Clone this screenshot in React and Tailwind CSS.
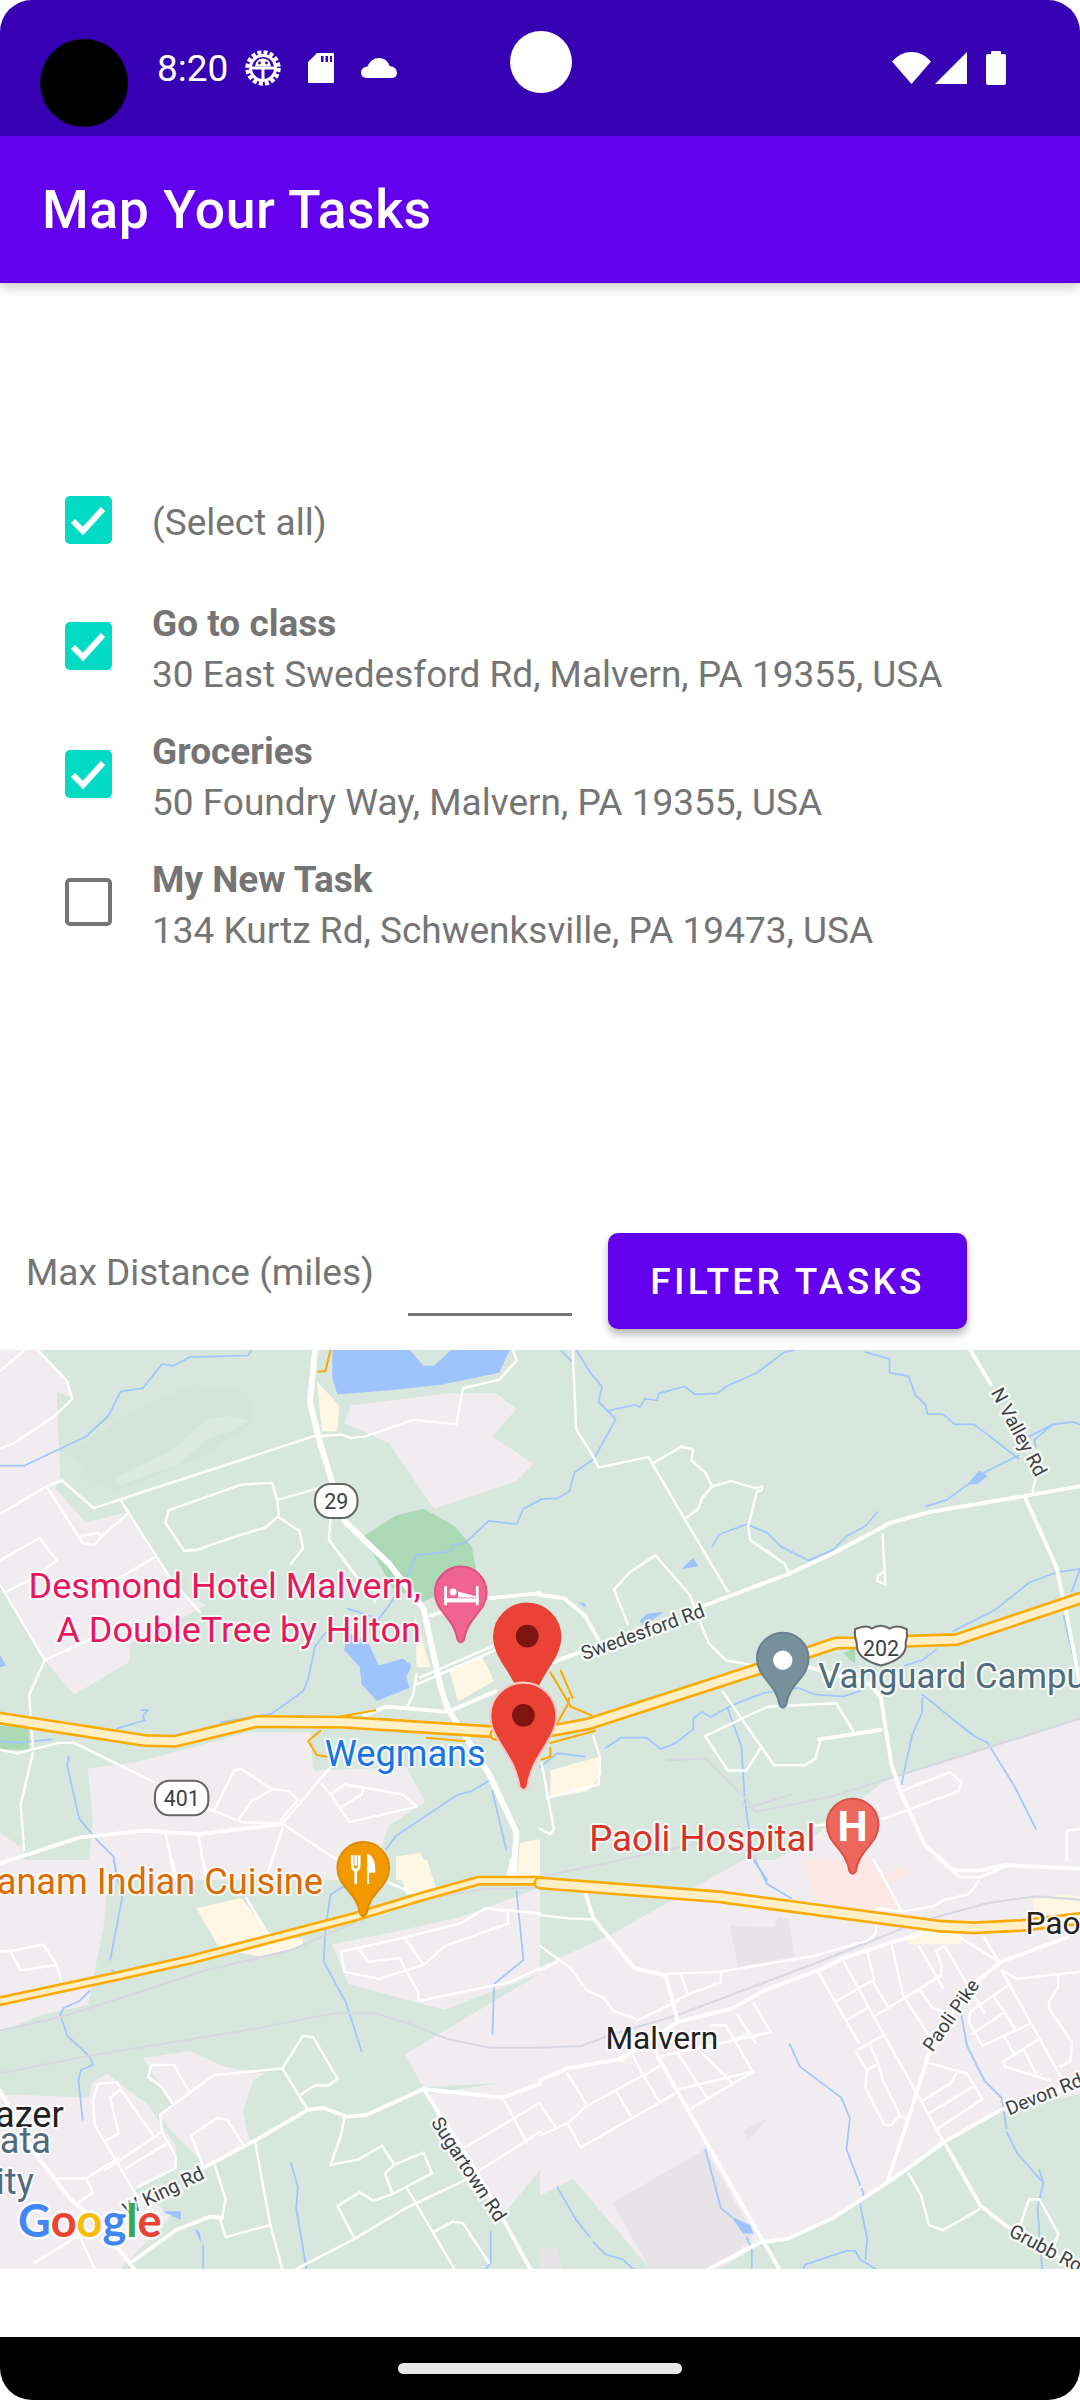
import React from 'react';

const S = 0.34435;

// Map pieces, traced per quadrant. Each quadrant has its own origin.
const QUADS = [
  {
    id: 'tl',
    t: `translate(0 -10) scale(${S})`,
    urban: [
      '0,29 110,29 190,110 210,170 165,150 175,400 160,430 250,530 370,500 450,630 530,740 600,770 380,880 375,935 215,1030 130,930 0,700',
      '1000,240 1020,190 1300,155 1440,155 1500,200 1430,280 1550,360 1500,410 1260,490 1130,300',
      '255,1245 400,1225 720,1140 900,1140 910,1250 1180,1240 1235,1340 1130,1410 1100,1490 1000,1568 250,1568 270,1400',
      '0,1430 70,1480 70,1568 0,1568',
    ],
    park: ['1055,570 1150,510 1230,490 1320,540 1370,600 1385,680 1230,760 1140,720', '0,1120 85,1125 85,1190 0,1190'],
    golf: ['200,330 380,210 560,130 720,150 730,240 600,330 340,440 270,410'],
    golf2: ['330,400 500,320 600,230 670,220 725,235 680,260 600,290 520,360 340,425'],
    water: [
      '965,29 1190,29 1230,75 1260,75 1310,29 1480,29 1450,95 1280,130 1140,145 980,158 965,110',
      '1000,900 1010,850 1070,880 1100,945 1170,925 1195,945 1180,980 1190,1010 1095,1048 1050,1000 1045,950',
      '0,915 18,945 0,950',
    ],
    sand: [
      '920,120 985,190 980,265 935,265',
      '1205,800 1250,950 1210,950',
      '1305,960 1400,920 1435,990 1330,1050',
      '1150,1500 1220,1490 1260,1568 1150,1568',
      '1510,1460 1568,1450 1568,1568 1500,1568',
    ],
    rivers: [
      '0,365 70,365 250,280 315,220 350,150 415,140 470,70 505,75 550,50 720,45 730,29',
      '1350,590 1420,525 1500,535 1520,490 1568,465',
      '1350,590 1315,595 1305,615 1210,625 1180,690 1130,770 1100,810 1010,780',
      '945,850 915,890 895,985 880,1020 790,1085 640,1110',
      '410,1075 430,1075 415,1090 420,1105 340,1128',
      '200,1210 195,1235 230,1390 280,1450 330,1500 340,1568',
      '0,1165 50,1170 150,1160',
      '1120,1480 1150,1440 1330,1320 1370,1310 1420,1280',
      '1430,1310 1470,1480',
    ],
    rail: [],
    thin: [
      '0,90 70,29',
      '110,29 195,120 210,170 160,220 40,300 0,315',
      '0,505 135,425 180,408 272,488 910,280 990,275 1020,285 1060,280 1200,232 1325,245 1345,140 1450,115 1500,60 1490,29',
      '135,425 240,590 275,595 295,570 370,505',
      '230,570 285,560 295,570',
      '350,465 500,700 580,790',
      '0,640 115,575 165,640 100,690 20,730',
      '450,630 280,730',
      '480,530 490,495 700,420 790,415 805,465 810,515 870,555 880,605 845,650',
      '480,530 535,612 570,610 685,570 770,545 805,515',
      '805,465 925,430',
      '960,515 955,580 1090,760',
      '0,710 130,930 85,1030 95,1180',
      '130,930 260,870',
      '95,1200 60,1350 70,1480',
      '0,1190 50,1200 170,1170 215,1170 450,1285',
      '605,1360 700,1400 820,1405',
      '620,1370 680,1250 700,1245 790,1305 840,1310 865,1335 815,1395',
      '695,1390 730,1340 790,1305',
      '960,1240 820,1405 980,1510',
      '935,1290 960,1320 1000,1290 1170,1320 1210,1355 1015,1400 960,1320',
      '985,1360 1050,1320 1055,1300',
      '480,1430 510,1568',
      '575,1435 600,1568',
      '820,1420 780,1540',
      '1210,1000 1440,900',
      '1220,980 1430,890',
      '1210,970 1200,1030 1180,1070',
    ],
    thick: [
      '0,1520 230,1445 420,1425 580,1435 820,1405',
      '1250,800 1420,750 1568,735',
      '1300,1080 1440,1020',
      '1060,1090 1120,1065 1300,1080',
    ],
    main: ['915,29 900,180 930,300 965,415', '1000,525 1130,650 1230,780 1280,1010 1300,1070 1420,1260 1500,1430 1490,1568'],
    ramps: ['930,1135 895,1165 920,1205 950,1210', '980,1095 1090,1075', '1100,1100 1230,1110', '1240,1155 1350,1165', '960,29 945,90 925,92'],
    hwy: ['0,1098 420,1163 510,1165 745,1108 1000,1110 1440,1138 1568,1145'],
    hwyThin: [],
  },
  {
    id: 'tr',
    t: `translate(${540} -10) scale(${S})`,
    urban: ['1568,1100 1000,1280 760,1470 570,1568 1568,1568'],
    park: ['880,910 915,895 915,940'],
    golf: [],
    golf2: [],
    water: [
      '410,665 445,632 460,658',
      '1240,420 1275,380 1300,395 1270,418',
      '110,760 130,765 135,780',
      '290,815 310,795 360,790 300,830',
    ],
    sand: ['30,1250 170,1210 180,1260 140,1310 30,1330'],
    rivers: [
      '60,29 90,60',
      '105,29 150,100 180,135 170,180 220,230 165,330 150,350 100,385 85,440 50,460 0,462',
      '200,205 275,188 290,195 305,170 340,175 345,155 420,135 450,158 515,155 540,135 630,95 710,35 740,29',
      '945,35 1015,55 1015,95 1070,105 1090,160 1120,190 1125,215 1170,215 1205,245 1260,245 1320,290 1390,345',
      '1420,280 1490,245 1550,238 1568,245',
      '1440,310 1435,290 1490,245',
      '1390,335 1290,385 1235,425 1180,465 1120,483',
      '500,600 520,565 600,535 660,560 700,600 780,640 850,610 890,570 945,540 980,500',
      '190,1185 235,1155 310,1155 350,1188 395,1170 445,1130 445,1100 470,1080 495,1095 560,1060 610,1040 650,1025 750,1010 800,1030 880,1035 930,1020',
      '130,1210 50,1200 0,1240',
      '545,1070 585,1180 595,1340 620,1510 660,1568',
      '1150,900 1110,930 1060,945',
      '1110,1030 1260,1150 1300,1170 1380,1300 1440,1420',
      '1110,1040 1110,1080 1080,1150 1050,1290',
      '1200,845 1320,785 1420,705 1500,675 1568,665',
      '1568,665 1545,730',
      '1520,800 1568,1000',
    ],
    rail: ['370,1220 480,1215 620,1355 730,1320', '590,1345 630,1370 850,1325 1568,1100', '0,1560 560,1440'],
    thin: [
      '95,29 105,260 150,330 170,370 315,340 420,520 545,730',
      '325,360 410,310 445,318 440,350 480,385 500,425 470,460 460,490 420,520',
      '500,425 555,410 625,430 645,425 645,435 630,440 605,540 610,580 710,650 720,670',
      '215,725 260,675 335,625 365,660 435,740 465,820 490,880 540,930 620,945',
      '215,725 255,825',
      '995,565 1003,710 980,700 980,685 1003,670',
      '1440,400 1430,440',
      '480,1150 660,1065 860,1055 910,1135',
      '480,1150 545,1250 600,1250 640,1185',
      '530,1020 645,1185 680,1235 770,1235 800,1215 815,1160',
      '1050,1310 1190,1255 1225,1285 1215,1310 1000,1390 800,1410',
      '1530,1425 1568,1420',
      '1530,1425 1530,1510',
      '5,1230 40,1420 30,1435 0,1420',
      '20,1330 170,1290 175,1215 155,1150',
    ],
    thick: [
      '0,950 120,905',
      '480,770 720,680 850,620 1020,530 1130,500 1568,425',
      '810,1160 990,1132',
      '0,740 70,750 130,800 170,870',
      '780,950 960,1000 990,1040 1020,1230 1050,1320 1120,1470 1200,1540 1280,1540 1350,1525 1568,1535',
      '1250,29 1310,130',
      '1410,460 1500,660 1530,800 1568,1000',
    ],
    main: [],
    ramps: ['30,965 90,1065 150,1090', '60,960 95,1040', '40,1130 80,1060 85,1040', '30,1170 160,1135', '30,1185 30,1210 5,1218'],
    hwy: ['-128,1145 30,1135 140,1115 620,960 860,880 910,880 1060,875 1210,870 1568,750'],
    hwyThin: [],
  },
  {
    id: 'bl',
    t: `translate(0 ${510}) scale(${S})`,
    urban: [
      '0,0 320,0 300,200 255,420 120,450 0,500',
      '0,680 260,690 265,650 310,620 430,710 510,830 510,890 390,960 500,1030 350,1188 0,1188',
      '415,575 550,555 650,600 770,620 735,640 705,730 725,815 600,890 500,790 460,740 500,710',
      '965,245 1140,210 1340,165 1568,80 1568,330 1290,435 1010,360',
      '1175,565 1568,330 1568,640 1230,660',
      '1240,680 1568,630 1568,900 1470,1020 1360,950',
    ],
    park: [],
    golf: [],
    golf2: [],
    water: ['470,1020 525,1020 525,1045', '565,1070 580,1080 585,1115'],
    sand: [
      '570,140 700,110 780,210 880,230 880,250 760,280 640,260',
      '1150,0 1240,0 1270,90 1180,100',
      '1510,0 1568,10 1568,45 1510,40',
    ],
    rivers: [
      '330,0 355,110 320,290',
      '325,320 340,330',
      '260,380 230,410 185,430 175,450 195,510 260,570 270,595 235,610 228,640 240,755',
      '960,100 945,200 940,295 1005,415 1050,555',
      '960,100 1000,75',
      '1500,90 1520,290 1435,360 1430,505',
      '845,880 865,950 860,1010 890,1188',
      '1425,1080 1425,1170 1410,1188',
      '590,1120 590,1188',
    ],
    rail: [
      '0,620 250,570 740,490 970,445 1090,445 1200,480 1300,520 1420,545 1568,545',
      '0,495 180,455 600,320 850,260 1150,130 1400,85 1568,80',
    ],
    thin: [
      '0,265 30,265 125,245 165,305 180,360',
      '30,265 60,320 165,305',
      '640,1045 655,1095 785,1060',
      '740,815 785,1060 820,1188',
      '625,890 655,985 645,1040',
      '1000,750 990,800 960,885 1040,870 1110,830 1145,885 1230,850 1255,910 1140,970 1085,990 1045,965 980,1005 1030,1100',
      '1145,885 1118,910 1140,970',
      '860,1188 1030,1100 1180,1010 1340,935 1568,790',
      '1180,950 1320,1188',
      '1260,1080 1315,1050 1345,1055 1420,1170',
      '1350,835 1568,705',
      '1465,700 1530,820',
      '820,605 880,510 910,515 980,635 955,655 915,655 875,680',
      '820,605 890,720',
      '820,605 620,625 465,740 470,790 510,860 510,895 400,950',
      '430,630 440,595 505,595 550,675',
      '430,630 470,660 500,705',
      '270,700 285,650 340,645 350,665 445,800',
      '320,690 350,665',
      '320,690 345,795 305,815',
      '270,700 275,770 400,980',
      '470,790 305,900',
      '490,820 365,895',
      '345,865 250,925 155,925',
      '250,925 270,965 220,1000',
      '555,800 630,750 660,755 705,825',
      '555,800 590,890',
      '990,265 1040,255 1175,225 1230,305 1100,345 1000,325 990,265',
      '1040,255 1070,295 1160,285 1215,385 1215,410 1480,355 1568,315',
      '1230,305 1290,250 1475,185 1475,150 1410,140 1335,185 1175,225',
      '1410,140 1568,155',
      '500,0 510,50',
      '590,0 595,40',
      '715,110 775,210',
      '1115,60 1220,105',
      '100,1170 230,1090',
      '230,1090 275,1188',
    ],
    thick: [
      '0,670 100,850 200,980 290,1060 390,1188',
      '385,1165 510,1075 610,1035 645,1040',
      '590,895 740,815 895,725 940,720 1005,745 1065,740 1230,665 1460,690 1568,650',
      '1230,665 1350,850 1430,985 1540,1188',
    ],
    main: ['1490,0 1480,45'],
    ramps: [],
    hwy: [],
    hwyThin: ['0,410 350,335 550,290 1030,165 1230,105 1390,60 1568,60'],
  },
  {
    id: 'br',
    t: `translate(${540} ${510}) scale(${S})`,
    urban: ['0,310 210,215 590,0 1568,0 1568,680 1340,725 1180,820 1020,930 850,1040 720,1100 640,1115 520,1188 320,1188 95,925 0,975'],
    urban2: [
      '210,995 480,840 620,1090 520,1188 320,1188',
      '0,1130 50,1125 65,1188 0,1188',
      '550,190 680,195 690,165 720,170 740,280 575,310',
      '590,785 660,750 600,820',
    ],
    pink: ['765,0 960,0 1050,150 880,150 800,110', '1000,50 1050,15 1065,40 1020,70'],
    park: [],
    golf: [],
    golf2: [],
    water: ['555,1035 610,1060 620,1085 590,1085'],
    sand: ['1060,230 1100,205 1230,205 1220,245 1080,245', '1430,115 1520,100 1568,105 1568,160 1435,160', '215,580 270,560 240,590'],
    rivers: [
      '725,535 755,600 875,690 900,750 890,840 930,945',
      '935,955 940,975',
      '930,1000 950,1100 945,1160',
      '765,1188 770,1175 890,1135 915,1135 930,1160 975,1188',
      '480,840 525,1010 555,1035',
      '600,1095 615,1130 615,1188',
      '50,950 105,1045 145,1095',
      '155,1110 190,1145 240,1160 270,1188',
      '1222,440 1240,540 1290,640 1340,690 1355,780',
      '1355,790 1385,850 1450,925 1462,935 1445,1010 1458,1188',
      '625,0 660,70 730,112',
      '1450,900 1462,935',
    ],
    rail: ['0,545 120,540 200,510 300,480 400,450 800,300 1100,180 1300,125 1440,105 1568,115'],
    thin: [
      '370,330 520,325 790,280 950,235 975,215 980,140',
      '410,335 430,390',
      '525,325 525,355 430,390',
      '390,410 430,390',
      '285,465 400,410',
      '0,250 90,315 135,378 185,400 215,440 275,460',
      '0,320 50,295',
      '0,160 85,170 150,172',
      '980,140 1050,150 1140,135 1175,115 1245,100 1275,60',
      '970,0 1050,150',
      '1160,0 1220,50 1280,50 1360,15 1568,25',
      '1100,250 1170,370',
      '808,325 925,530',
      '882,295 1000,510 1090,670 1170,815',
      '860,410 965,350 1010,425',
      '890,465 950,430',
      '950,265 970,345',
      '1020,240 1055,395 1130,510',
      '970,455 1165,335 1165,300 1150,265 1175,250 1290,445',
      '1105,380 1140,430 1170,440',
      '925,550 995,510',
      '918,560 950,610 975,595',
      '950,610 945,660 1000,770 1020,770 1045,740 1060,750',
      '960,540 985,600 995,640 1045,740',
      '1220,225 1340,300',
      '1290,225 1335,300',
      '1340,320 1385,345 1568,325',
      '1505,335 1505,370 1478,410 1478,430 1545,530 1540,585 1510,600',
      '1340,320 1510,625',
      '1365,360 1250,440 1245,470 1285,540 1425,475',
      '1320,400 1380,490',
      '1255,505 1345,445',
      '1350,515 1375,560',
      '1450,520 1345,585 1350,600 1480,640',
      '1405,550 1440,620',
      '1130,590 1240,620 1285,695 1155,780',
      '1210,620 1190,650 1110,700',
      '1255,660 1130,735',
      '0,800 80,765 135,715 300,625 345,600',
      '80,620 135,710',
      '0,710 45,775',
      '80,765 118,835 390,680',
      '220,670 265,745',
      '300,625 345,700',
      '270,570 300,625',
      '400,560 485,690',
      '470,560 560,650',
      '405,665 615,615',
      '440,720 620,615',
      '500,480 540,480 615,610',
      '350,570 670,500',
      '620,415 670,500',
      '570,445 625,530',
      '570,520 610,500',
      '1070,910 1105,970 1130,1060 1170,1075 1275,1015',
      '1395,1060 1420,985 1450,985 1505,1085 1490,1130',
    ],
    thick: [
      '490,1188 640,1110 720,1100 850,1040 1020,930 1180,815 1340,725 1568,650',
      '130,90 155,170 275,315 365,335 400,470',
      '330,550 500,850 650,1110 695,1188',
      '0,640 80,605 225,580 270,555 400,470 560,430 660,375 810,320 880,285 1020,240 1100,215 1160,205',
      '1265,355 1340,295 1530,225',
      '1010,930 1080,720 1130,560',
      '1190,450 1265,360',
      '1180,830 1280,1005 1350,1060 1568,1188',
    ],
    main: [],
    ramps: [],
    hwy: ['0,67 520,107 1160,192 1260,197 1400,190 1568,170'],
    hwyThin: [],
  },
];

function Lines({ list, color, width }) {
  return list.map((p, i) => (
    <polyline key={i} points={p} fill="none" stroke={color} strokeWidth={width} strokeLinejoin="round" strokeLinecap="round" />
  ));
}

function Areas({ list = [], color }) {
  return list.map((p, i) => <polygon key={i} points={p} fill={color} />);
}

function Label({ x, y, size = 105, color, anchor, weight = 400, halo = 12, rotate, children }) {
  return (
    <text
      transform={`translate(${x} ${y})${rotate ? ` rotate(${rotate})` : ''}`}
      fontSize={size}
      fontWeight={weight}
      fill={color}
      textAnchor={anchor}
      stroke="#ffffff"
      strokeOpacity="0.75"
      strokeWidth={halo}
      strokeLinejoin="round"
      paintOrder="stroke"
    >
      {children}
    </text>
  );
}

function Pin({ x, y, r = 75, h = 222, fill, edge, children }) {
  const d = `M0 0C${r * 0.55} 0 ${r} ${r * 0.45} ${r} ${r}C${r} ${r * 1.75} ${r * 0.25} ${h * 0.66} ${r * 0.12} ${h * 0.96}Q0 ${h * 1.02} ${-r * 0.12} ${h * 0.96}C${-r * 0.25} ${h * 0.66} ${-r} ${r * 1.75} ${-r} ${r}C${-r} ${r * 0.45} ${-r * 0.55} 0 0 0Z`;
  return (
    <g transform={`translate(${x} ${y})`}>
      <path d={d} fill={fill} stroke={edge} strokeWidth="6" />
      {children}
    </g>
  );
}

function Shield({ x, y, w, h, rx, size = 62, children }) {
  return (
    <g>
      <rect x={x} y={y} width={w} height={h} rx={rx} fill="#ffffff" stroke="#666666" strokeWidth="6" />
      <text x={x + w / 2} y={y + h / 2 + size * 0.36} fontSize={size} fill="#3c4043" textAnchor="middle">
        {children}
      </text>
    </g>
  );
}

function MapView() {
  return (
    <svg width="1080" height="919" viewBox="0 0 1080 919" className="block bg-[#d7e7dd]">
      {QUADS.map((q) => (
        <g key={q.id} transform={q.t}>
          <Areas list={q.urban} color="#f0ecf0" />
        </g>
      ))}
      {QUADS.map((q) => (
        <g key={q.id} transform={q.t}>
          <Areas list={q.urban2} color="#e7e4e8" />
          <Areas list={q.pink} color="#fee8e5" />
          <Areas list={q.golf} color="#d3e5d9" />
          <Areas list={q.golf2} color="#dbeadd" />
          <Areas list={q.park} color="#abd9b6" />
          <Areas list={q.sand} color="#fef7e4" />
          <Areas list={q.water} color="#9fc3fd" />
          <Lines list={q.rivers} color="#a1c5fd" width={5} />
          <Lines list={q.rail} color="#d6d7e1" width={6} />
        </g>
      ))}
      {QUADS.map((q) => (
        <g key={q.id} transform={q.t}>
          <Lines list={q.thin} color="#ffffff" width={7} />
          <Lines list={q.thick} color="#ffffff" width={11} />
          <Lines list={q.main} color="#ffffff" width={17} />
          <Lines list={q.ramps} color="#fbab00" width={6} />
        </g>
      ))}
      {QUADS.map((q) => (
        <g key={q.id} transform={q.t}>
          <Lines list={q.hwy} color="#fbab00" width={38} />
          <Lines list={q.hwyThin} color="#fbab00" width={29} />
          <Lines list={q.hwy} color="#feefc6" width={23} />
          <Lines list={q.hwyThin} color="#feefc6" width={14} />
        </g>
      ))}

      {/* top left */}
      <g transform={`translate(0 -10) scale(${S})`}>
        <Shield x={915} y={418} w={123} h={99} rx={45}>29</Shield>
        <Shield x={450} y={1280} w={155} h={100} rx={42}>401</Shield>
        <Label x={1222} y={750} size={104.5} color="#e8175d" anchor="end">Desmond Hotel Malvern,</Label>
        <Label x={1222} y={877} size={104.5} color="#e8175d" anchor="end">A DoubleTree by Hilton</Label>
        <Label x={943} y={1237} color="#1a73e8">Wegmans</Label>
        <Pin x={1338} y={658} fill="#ef6492" edge="#e0527f">
          <rect x={-48} y={57} width={8} height={55} fill="#fff" />
          <rect x={44} y={57} width={8} height={55} fill="#fff" />
          <rect x={-48} y={92} width={100} height={12} fill="#fff" />
          <circle cx={-22} cy={74} r={10} fill="#fff" />
          <polygon points="-8,90 -8,72 44,86 44,90" fill="#fff" />
        </Pin>
        <Pin x={1055} y={1458} h={217} fill="#f29900" edge="#e08c00">
          <path d="M-32 38V68Q-32 80 -22 82V122M-22 38V68M-12 38V68Q-12 80 -22 82" fill="none" stroke="#fff" strokeWidth="8" />
          <path d="M14 122V38Q32 44 32 86H14" fill="#fff" stroke="#fff" strokeWidth="6" />
        </Pin>
        <Pin x={1531} y={765} r={96} h={315} fill="#ea4335" edge="#ea4335">
          <circle cx={0} cy={95} r={33} fill="#7f1510" />
        </Pin>
        <Pin x={1520} y={995} r={96} h={315} fill="#ea4335" edge="#f5c9c5">
          <circle cx={0} cy={95} r={33} fill="#7f1510" />
        </Pin>
      </g>

      {/* top right */}
      <g transform={`translate(540 -10) scale(${S})`}>
        <Label x={128} y={930} size={56} color="#3c4043" rotate={-20} halo={14}>Swedesford Rd</Label>
        <Label x={1308} y={152} size={56} color="#3c4043" rotate={62} halo={14}>N Valley Rd</Label>
        <Label x={808} y={1010} size={101} color="#4f6b7d">Vanguard Campus</Label>
        <Label x={143} y={1485} size={106} color="#d93025">Paoli Hospital</Label>
        <path d="M915 840Q950 825 963 838Q990 822 1015 838Q1040 825 1065 840Q1068 860 1062 880Q1068 925 990 945Q915 925 920 880Q912 860 915 840Z" fill="#ffffff" stroke="#666666" strokeWidth="6" />
        <text x={990} y={917} fontSize={62} fill="#3c4043" textAnchor="middle">202</text>
        <Pin x={705} y={850} h={220} fill="#78909c" edge="#6a8290">
          <circle cx={0} cy={80} r={28} fill="#fff" />
        </Pin>
        <Pin x={908} y={1332} h={220} fill="#ee675c" edge="#d9534a">
          <text x={0} y={124} fontSize={124} fontWeight={700} fill="#fff" textAnchor="middle">H</text>
        </Pin>
      </g>

      {/* bottom left */}
      <g transform={`translate(0 510) scale(${S})`}>
        <Label x={938} y={100} color="#dc6c00" anchor="end">anam Indian Cuisine</Label>
        <Label x={185} y={775} color="#202124" anchor="end">azer</Label>
        <Label x={148} y={850} color="#4f6b7d" anchor="end">ata</Label>
        <Label x={98} y={970} color="#4f6b7d" anchor="end">ity</Label>
        <Label x={368} y={1035} size={56} color="#3c4043" rotate={-26} halo={14}>W King Rd</Label>
        <Label x={1250} y={762} size={56} color="#3c4043" rotate={57} halo={14}>Sugartown Rd</Label>
        <text x={52} y={1095} fontFamily="Lato, Roboto, sans-serif" fontSize={131} fontWeight={700} stroke="#ffffff" strokeOpacity="0.7" strokeWidth={16} strokeLinejoin="round" paintOrder="stroke">
          <tspan fill="#4285f4">G</tspan>
          <tspan fill="#ea4335">o</tspan>
          <tspan fill="#fbbc05">o</tspan>
          <tspan fill="#4285f4">g</tspan>
          <tspan fill="#34a853">l</tspan>
          <tspan fill="#ea4335">e</tspan>
        </text>
      </g>

      {/* bottom right */}
      <g transform={`translate(540 510) scale(${S})`}>
        <Label x={190} y={550} size={92} color="#202124">Malvern</Label>
        <Label x={1410} y={215} size={92} color="#202124">Paoli</Label>
        <Label x={1140} y={560} size={55} color="#3c4043" rotate={-55} halo={14}>Paoli Pike</Label>
        <Label x={1362} y={742} size={56} color="#3c4043" rotate={-22} halo={14}>Devon Rd</Label>
        <Label x={1358} y={1090} size={56} color="#3c4043" rotate={28} halo={14}>Grubb Rd</Label>
      </g>
    </svg>
  );
}

function GearIcon() {
  return (
    <svg width="36" height="36" viewBox="0 0 36 36" fill="none">
      <circle cx="18" cy="18" r="15.5" stroke="#fff" strokeWidth="4.5" strokeDasharray="4 2.09" />
      <circle cx="18" cy="18" r="12.5" stroke="#fff" strokeWidth="3" />
      <path d="M7 18H29M18 18V29" stroke="#fff" strokeWidth="3" />
      <path d="M10 16.5Q11 8.5 18 8.5Q25 8.5 26 16.5Z" fill="#fff" />
      <circle cx="14.5" cy="13" r="1.4" fill="#3700b3" />
      <circle cx="21.5" cy="13" r="1.4" fill="#3700b3" />
    </svg>
  );
}

function StatusBar() {
  return (
    <div className="relative flex h-[136px] items-center rounded-t-[32px] bg-[#3700b3] pl-[157px] pr-[74px] text-white">
      <div className="absolute left-[40px] top-[39px] h-[88px] w-[88px] rounded-full bg-black" />
      <div className="absolute left-[510px] top-[31px] h-[62px] w-[62px] rounded-full bg-white" />
      <span className="text-[37px] leading-none">8:20</span>
      <div className="ml-[17px]"><GearIcon /></div>
      <svg className="ml-[27px]" width="26" height="30" viewBox="0 0 26 30">
        <path d="M9 0H25Q26 0 26 1V29Q26 30 25 30H1Q0 30 0 29V9ZM13 3V9H15.5V3ZM17.5 3V9H20V3ZM22 3V9H24V3Z" fill="#fff" fillRule="evenodd" />
      </svg>
      <svg className="ml-[27px]" width="36" height="20" viewBox="0 0 36 20">
        <path d="M7 20Q0 20 0 14.5Q0 9.5 6.5 8.5Q10 0 18 0Q26 0 28.5 8Q36 9 36 15Q36 20 30 20Z" fill="#fff" />
      </svg>
      <div className="ml-auto flex items-center">
        <svg width="39" height="32" viewBox="0 0 39 32">
          <path d="M19.5 32L0 9.5Q8 0 19.5 0Q31 0 39 9.5Z" fill="#fff" />
        </svg>
        <svg className="ml-[4px]" width="32" height="32" viewBox="0 0 32 32">
          <path d="M32 0V32H0Z" fill="#fff" />
        </svg>
        <svg className="ml-[19px]" width="20" height="34" viewBox="0 0 20 34">
          <path d="M5 3V1Q5 0 6 0H14Q15 0 15 1V3H18Q20 3 20 5V32Q20 34 18 34H2Q0 34 0 32V5Q0 3 2 3Z" fill="#fff" />
        </svg>
      </div>
    </div>
  );
}

function Checkbox({ checked }) {
  if (!checked) {
    return <div className="ml-[65px] h-[48px] w-[47px] shrink-0 rounded-[5px] border-[4px] border-[#757575]" />;
  }
  return (
    <div className="ml-[65px] flex h-[48px] w-[47px] shrink-0 items-center justify-center rounded-[5px] bg-[#03dac5]">
      <svg width="37" height="30" viewBox="0 0 37 30">
        <path d="M3 16L13 26L33 4" fill="none" stroke="#fff" strokeWidth="6" />
      </svg>
    </div>
  );
}

const tasks = [
  { name: 'Go to class', address: '30 East Swedesford Rd, Malvern, PA 19355, USA', checked: true },
  { name: 'Groceries', address: '50 Foundry Way, Malvern, PA 19355, USA', checked: true },
  { name: 'My New Task', address: '134 Kurtz Rd, Schwenksville, PA 19473, USA', checked: false },
];

export default function App() {
  return (
    <div className="relative flex h-[2400px] w-[1080px] flex-col overflow-hidden bg-white font-[Roboto,sans-serif] text-[37px] text-[#757575]">
      <StatusBar />
      <header className="flex h-[147px] items-center bg-[#6200ee] pl-[42px] pt-[2px] text-[53.5px] font-medium tracking-[0.55px] text-white shadow-[0_4px_12px_rgba(0,0,0,0.22)]">
        Map Your Tasks
      </header>

      {/* Task list */}
      <div className="pt-[191px]">
        <div className="mb-4 flex h-[92px] items-center">
          <Checkbox checked />
          <div className="ml-[40px] pt-[6px] leading-[52px]">(Select all)</div>
        </div>
        {tasks.map((task) => (
          <div key={task.name} className="flex h-[128px] items-center">
            <Checkbox checked={task.checked} />
            <div className="ml-[40px] pt-[5px]">
              <div className="font-bold leading-[52px]">{task.name}</div>
              <div className="leading-[50px]">{task.address}</div>
            </div>
          </div>
        ))}
      </div>

      {/* Filter */}
      <div className="mt-[267px] flex h-[96px] items-start">
        <div className="w-[408px] pl-[26px] pt-[14px] leading-[52px]">Max Distance (miles)</div>
        <input className="h-[83px] w-[164px] border-b-[3px] border-[#757575] outline-none" />
        <button className="ml-[36px] h-[96px] w-[359px] rounded-[10px] bg-[#6200ee] pt-[2px] text-[37px] font-medium tracking-[3.3px] text-white shadow-[0_5px_9px_rgba(0,0,0,0.3)]">
          FILTER TASKS
        </button>
      </div>

      <div className="mt-[21px]">
        <MapView />
      </div>

      <div className="mt-[68px] flex h-[63px] items-center justify-center rounded-b-[32px] bg-black">
        <div className="h-[11px] w-[284px] rounded-full bg-[#e8e8e8]" />
      </div>
    </div>
  );
}
